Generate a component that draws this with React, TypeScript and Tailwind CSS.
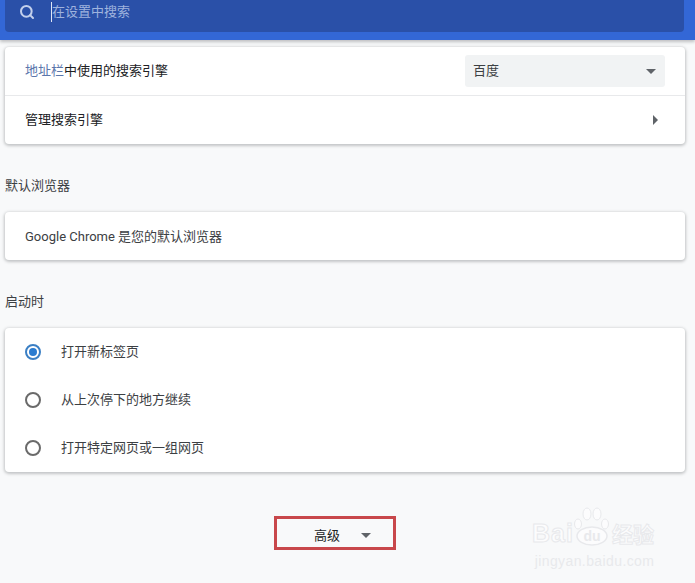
import { Search } from "lucide-react";

const fontStack = "font-['Roboto','Noto_Sans_CJK_SC',sans-serif]";

const Radio = ({ checked }: { checked?: boolean }) => (
  <span
    className={`flex h-4 w-4 items-center justify-center rounded-full border-2 ${
      checked ? "border-[#3b7fc4]" : "border-[#6a6a6a]"
    }`}
  >
    {checked ? <span className="h-2 w-2 rounded-full bg-[#2a7bd0]" /> : null}
  </span>
);

const StartupRow = ({ label, checked }: { label: string; checked?: boolean }) => (
  <div className="flex h-12 items-center pl-5 text-[13px] text-[#3c4043]">
    <Radio checked={checked} />
    <span className="ml-5">{label}</span>
  </div>
);

const SectionTitle = ({ children }: { children: string }) => (
  <div className="flex h-[68px] items-end px-[5px] pb-[17px] text-[13px] leading-[18px] text-[#3c4043]">
    {children}
  </div>
);

const Card = ({ children }: { children: React.ReactNode }) => (
  <div className="mx-[5px] w-[680px] rounded bg-white shadow-[0_1px_3px_1px_rgba(60,64,67,0.28)]">
    {children}
  </div>
);

const Watermark = () => (
  <div className="absolute left-[532px] top-[507px] flex w-[125px] flex-col items-center">
    <div className="flex h-[40px] w-full items-end">
      <span className="w-[40px] font-['Liberation_Sans',sans-serif] text-[25px] font-bold leading-[27px] tracking-[1px] text-[#fcfcfd] [-webkit-text-stroke:1px_#e8e9ec]">
        Bai
      </span>
      <svg width="40" height="40" viewBox="0 0 40 40" fill="none">
        <ellipse cx="20" cy="29" rx="15" ry="9" stroke="#e8e9ec" strokeWidth="1.5" fill="#fcfcfd" />
        <ellipse cx="6" cy="17" rx="3.5" ry="5" stroke="#e8e9ec" fill="#fcfcfd" />
        <ellipse cx="15" cy="7" rx="4" ry="6" stroke="#e8e9ec" fill="#fcfcfd" />
        <ellipse cx="25" cy="7" rx="4" ry="6" stroke="#e8e9ec" fill="#fcfcfd" />
        <ellipse cx="33" cy="17" rx="3.5" ry="5" stroke="#e8e9ec" fill="#fcfcfd" />
        <text x="20" y="34" textAnchor="middle" fontSize="14" fontWeight="700" fontFamily="Liberation Sans" fill="#e8e9ec">
          du
        </text>
      </svg>
      <span className="font-['Noto_Sans_CJK_SC',sans-serif] text-[21px] font-bold leading-[27px] text-[#fcfcfd] [-webkit-text-stroke:1px_#e8e9ec]">
        经验
      </span>
    </div>
    <span className="mt-[6px] font-['Liberation_Sans',sans-serif] text-[14px] leading-[17px] tracking-[0.4px] text-[#e8e9ec]">
      jingyan.baidu.com
    </span>
  </div>
);

export default function App() {
  return (
    <div className={`relative flex h-[583px] w-[695px] flex-col overflow-hidden bg-[#f8f9fa] ${fontStack}`}>
      <header className="h-10 shrink-0 bg-[#3367d6] px-[5px] shadow-[0_2px_3px_rgba(60,64,67,0.3)]">
        <div className="flex h-8 w-[679px] items-center rounded-b-sm bg-[#2a50a8] pb-2 pl-[14px]">
          <Search size={16} strokeWidth={3} className="text-[#c3d0ec]" />
          <span className="ml-[16px] h-[20px] w-px bg-[#dfe6f5]" />
          <span className="text-[13px] text-[#9fb3de]">在设置中搜索</span>
        </div>
      </header>

      <div className="mt-[7px]">
        <Card>
          <div className="flex h-[49px] items-center justify-between border-b border-[#e8e9eb] px-5 text-[13px]">
            <span className="text-[#202124]">
              <span className="text-[#5a76ab]">地址栏</span>中使用的搜索引擎
            </span>
            <div className="flex h-8 w-[200px] items-center justify-between rounded-[3px] bg-[#f1f3f4] pl-2 pr-[9px] text-[#3c4043]">
              <span>百度</span>
              <span className="h-0 w-0 border-x-[5px] border-t-[5px] border-x-transparent border-t-[#5f6368]" />
            </div>
          </div>
          <div className="flex h-12 items-center justify-between pl-5 pr-[27px] text-[13px] text-[#202124]">
            <span>管理搜索引擎</span>
            <span className="h-0 w-0 border-y-[5px] border-l-[5px] border-y-transparent border-l-[#5f6368]" />
          </div>
        </Card>
      </div>

      <SectionTitle>默认浏览器</SectionTitle>
      <Card>
        <div className="flex h-12 items-center pl-5 pt-px text-[13px] text-[#3c4043]">Google Chrome 是您的默认浏览器</div>
      </Card>

      <SectionTitle>启动时</SectionTitle>
      <Card>
        <StartupRow label="打开新标签页" checked />
        <StartupRow label="从上次停下的地方继续" />
        <StartupRow label="打开特定网页或一组网页" />
      </Card>

      <div className="ml-[274px] mt-[44px] flex h-[34px] w-[122px] items-center self-start border-[3px] border-[#c8474b] pl-[37px] pt-[5px] text-[13px] text-[#202124]">
        <span>高级</span>
        <span className="ml-[21px] h-0 w-0 border-x-[5px] border-t-[5px] border-x-transparent border-t-[#5f6368]" />
      </div>

      <Watermark />
    </div>
  );
}
